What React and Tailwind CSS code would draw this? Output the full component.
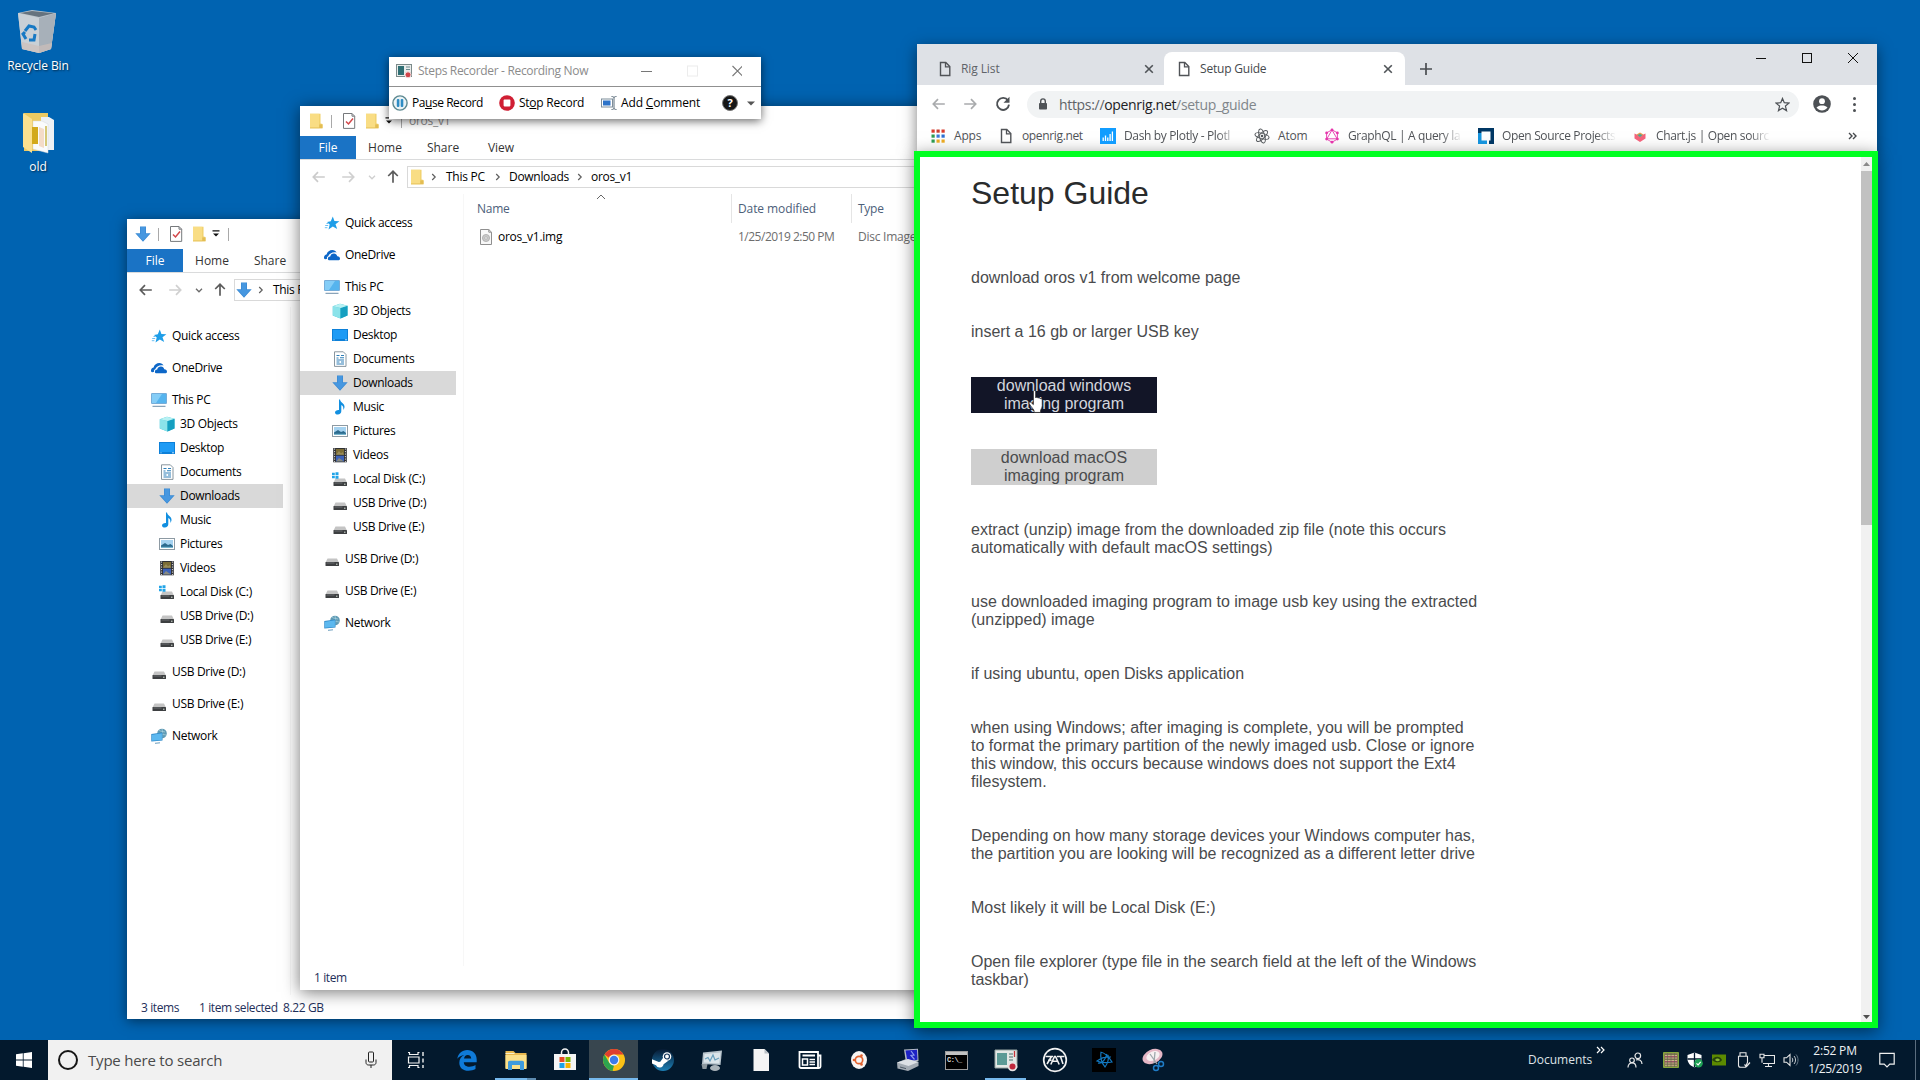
import React from "react";

const UI = "font-['Open_Sans','Noto_Sans',sans-serif]";

/* ---------- small icons ---------- */

function Ico({ size = 16, vb = 16, children, className = "" }) {
  return (
    <svg width={size} height={size} viewBox={`0 0 ${vb} ${vb}`} fill="none" className={`shrink-0 ${className}`}>
      {children}
    </svg>
  );
}

const StarIcon = () => (
  <Ico>
    <path d="M8.8 1.5 10.4 6l5 .3-3.9 3 1.7 4.8-4.400-2.600-4.300 2.900 1.200-4.900L3 7l3.800-.8z" fill="#1f9ee8" />
    <path d="M1.200 10.500h3M.8 12.700h2.600M2.500 8.500h2" stroke="#5bb8f0" strokeWidth=".9" />
  </Ico>
);
const CloudIcon = () => (
  <Ico>
    <path d="M0 11.300C-.3 8.600 1.400 7.600 2.600 7.500 3.200 4.500 5.800 3 8.300 3c2 0 3.500 1 4.300 2.500C8.500 4.500 5 6.800 4.300 9.300 3 9.700 2.700 11 3 12 1.300 12.300 .3 12.200 0 11.300z" fill="#0d67c8" />
    <path d="M4 12.500c-.6-2.200 1-3.200 2.200-3.100C6.700 7.300 8.300 6.400 10 6.500c1.700.1 2.900 1.200 3.300 2.800 1.700.1 2.700 1.300 2.700 2.500 0 .9-.5 1.400-1.200 1.400H5c-.5 0-.9-.3-1-.7z" fill="#0d67c8" />
  </Ico>
);
const PCIcon = () => (
  <Ico>
    <rect x=".3" y="1.300" width="15.400" height="10.400" fill="#3d8bc9" />
    <path d="M1 2h14v9H1z" fill="#56b4ee" />
    <path d="M1 2h10L5 11H1z" fill="#84cdf7" />
    <path d="M1.500 14.300h13" stroke="#6d8ea8" strokeWidth="1" />
  </Ico>
);
const CubeIcon = () => (
  <Ico>
    <path d="M.8 3.300 8 .8l7.500 1.900v9.800L8.500 15.600.8 12.600z" fill="#34bfd2" />
    <path d="M.8 3.300 8.500 5v10.600L.8 12.600z" fill="#8be3ea" />
    <path d="M8.500 5 15.500 2.700v9.800L8.500 15.600z" fill="#159fc0" />
    <path d="M.8 3.300 8 .8l7.500 1.900L8.500 5z" fill="#b8f1f3" />
  </Ico>
);
const DesktopIcon = () => (
  <Ico>
    <rect x="0" y="2" width="16" height="12" fill="#0d80d8" />
    <rect x="1" y="3" width="14" height="9" fill="#1e9bf5" />
    <path d="M1.500 12.800h1M13 12.800h2" stroke="#b8e0ff" strokeWidth="1" />
  </Ico>
);
const DocumentsIcon = () => (
  <Ico>
    <path d="M2.500.8h8.800l2.700 2.700v11.900H2.500z" fill="#fff" stroke="#7c8a94" strokeWidth=".9" />
    <path d="M4.500 4.500h3M9 4.500h3M4.500 7h2M8 6.800h4M4.500 9h7.500M4.500 11h3M9 11h3M4.500 13h7.500" stroke="#2e7fb8" strokeWidth="1.100" />
  </Ico>
);
const DownIcon = () => (
  <Ico>
    <path d="M5 .5h6v6.700h4.700L8 15.800.3 7.200H5z" fill="#3989d3" />
    <path d="M5.700 1h4.600v7H14L8 14.800 2 8h3.700z" fill="#4697e0" />
  </Ico>
);
const MusicIcon = () => (
  <Ico>
    <path d="M8 .5c.4 3 4.500 3.800 4.500 7.200 0 1.500-.6 2.400-1.200 3.200.4-2.600-.3-4.100-2-4.900v6.300c0 1.900-1.500 3.200-3.500 3.200-1.700 0-2.800-.9-2.800-2.100 0-1.600 1.800-2.700 4-2.500V.5z" fill="#128fe0" />
  </Ico>
);
const PicturesIcon = () => (
  <Ico>
    <rect x=".5" y="2.500" width="15" height="11" fill="#fff" stroke="#8d9aa3" />
    <rect x="2" y="4" width="12" height="8" fill="#a5d2f0" />
    <path d="M2 9.500 6 7l3 2 2.500-1L14 10v2H2z" fill="#2c6b8e" />
    <path d="M2 10.800h12V12H2z" fill="#78b6cf" />
  </Ico>
);
const VideosIcon = () => (
  <Ico>
    <rect x="1.200" y="1" width="13.600" height="14.300" fill="#2f3033" />
    <rect x="4" y="2" width="8" height="5.800" fill="#7b6c35" />
    <rect x="4" y="8.700" width="8" height="5.800" fill="#3d62b8" />
    <path d="M4 7.800 7 4l2 2.500L10.500 5 12 7.800zM4 14.500 7 11l5 3.500z" fill="#a99c6a" opacity=".7" />
    <path d="M2.600 1.500v13.500M13.400 1.500v13.500" stroke="#d9d9d9" strokeWidth="1" strokeDasharray="1.200 1.300" />
  </Ico>
);
const DriveIcon = ({ win }) => (
  <Ico>
    <path d="M3.500 7.500h9.500l1.800 3.800H1.700z" fill="#c4c4c4" />
    <rect x="1.500" y="11" width="13.500" height="4" rx=".5" fill="#3d3f41" />
    <path d="M2.500 12h8" stroke="#77797b" strokeWidth=".8" />
    <rect x="12" y="12.700" width="1.500" height="1" fill="#d8e2d8" />
    {win && <path d="M0 1.800h2.800v2.400H0zM3.500 1.300h3v2.900h-3zM0 4.900h2.800v2.400H0zM3.500 4.900h3v2.900h-3z" fill="#21a4e8" />}
  </Ico>
);
const NetworkIcon = () => (
  <Ico>
    <circle cx="11" cy="5.500" r="4.800" fill="#5f9ab4" />
    <path d="M8 2c2 2 4 1 6 2M7 6c3 1 5 0 8 1M11 1c1 3 1 6 0 9" stroke="#b6dce6" strokeWidth=".6" />
    <path d="M.3 6 11.500 4.500v8L.3 13.500z" fill="#2b86c6" />
    <path d="M1 6.700 10.900 5.300v6.600L1 12.800z" fill="#5cb8ef" />
    <path d="M4 15.300l5-.5" stroke="#6a9cbd" />
  </Ico>
);
const FolderIcon = ({ className }) => (
  <Ico className={className}>
    <path d="M2 .8h10.500v9.700l2 .5v4.200H2z" fill="#f0cf68" />
    <path d="M2 .8h9.300v14.400H2z" fill="#f9dd84" />
    <path d="M11.300 11.500h3.200v3.700H2v-.6h9.300z" fill="#e3bd53" />
  </Ico>
);
const CheckDocIcon = () => (
  <Ico>
    <path d="M2.500.5h8.500l2.700 2.700v12.200H2.500z" fill="#fff" stroke="#76797c" />
    <path d="M11 .5v2.700h2.700" stroke="#76797c" />
    <path d="M5 8.500 7.500 11 12 5.500" stroke="#d2474a" strokeWidth="1.500" />
  </Ico>
);
const DiscFileIcon = () => (
  <Ico>
    <path d="M2.500.5h8.300l2.700 2.700v12.300h-11z" fill="#f8f8f8" stroke="#8f8f8f" />
    <path d="M10.800.5v2.700h2.700" stroke="#8f8f8f" />
    <circle cx="8" cy="9" r="3.600" fill="#c9c9c9" stroke="#a5a5a5" strokeWidth=".7" />
    <circle cx="8" cy="9" r="1.200" fill="#fff" stroke="#999" strokeWidth=".6" />
  </Ico>
);
const PageIcon = () => (
  <Ico>
    <path d="M3.500 1.500h5.300l4 4v9H3.500z" stroke="#505357" strokeWidth="1.400" />
    <path d="M8.500 1.700v4.100h4.100" stroke="#505357" strokeWidth="1.300" />
  </Ico>
);
const Arrow = ({ dir, color }) => (
  <Ico size={14} vb={14}>
    <g transform={dir === "right" ? "rotate(180 7 7)" : dir === "up" ? "rotate(90 7 7)" : undefined}>
      <path d="M12.800 7H1.500M6 2.200 1.300 7 6 11.800" stroke={color} strokeWidth="1.700" />
    </g>
  </Ico>
);
const Crumb = () => (
  <svg width="6" height="8" viewBox="0 0 6 8" fill="none" className="shrink-0">
    <path d="m1.200 1 3 3-3 3" stroke="#5f5f5f" strokeWidth="1.200" />
  </svg>
);
const MenuCaret = () => (
  <svg width="8" height="8" viewBox="0 0 8 8" className="shrink-0">
    <path d="M.5.300h7v1.200h-7zM1 3.500h6L4 6.600z" fill="#111" />
  </svg>
);

/* ---------- explorer ---------- */

const NAV = [
  ["Quick access", 1, StarIcon, "mb-2"],
  ["OneDrive", 1, CloudIcon, "mb-2"],
  ["This PC", 1, PCIcon],
  ["3D Objects", 2, CubeIcon],
  ["Desktop", 2, DesktopIcon],
  ["Documents", 2, DocumentsIcon],
  ["Downloads", 2, DownIcon],
  ["Music", 2, MusicIcon],
  ["Pictures", 2, PicturesIcon],
  ["Videos", 2, VideosIcon],
  ["Local Disk (C:)", 2, () => <DriveIcon win />],
  ["USB Drive (D:)", 2, DriveIcon],
  ["USB Drive (E:)", 2, DriveIcon, "mb-2"],
  ["USB Drive (D:)", 1, DriveIcon, "mb-2"],
  ["USB Drive (E:)", 1, DriveIcon, "mb-2"],
  ["Network", 1, NetworkIcon],
];

function NavPane() {
  return (
    <nav className="flex w-[156px] shrink-0 flex-col pt-[17px] tracking-[-0.32px]">
      {NAV.map(([label, level, Icon, gap], i) => (
        <div
          key={i}
          className={`flex h-6 shrink-0 items-center ${level === 1 ? "gap-[5px] pl-6" : "gap-[5px] pl-8"} ${gap || ""} ${label === "Downloads" ? "bg-[#d9d9d9]" : ""}`}
        >
          <Icon />
          <span className="whitespace-nowrap">{label}</span>
        </div>
      ))}
    </nav>
  );
}

function Explorer({ lead, title, canGoBack, tabs, crumbs, children, status }) {
  return (
    <div className={`flex h-full flex-col bg-white text-[12px] tracking-[-0.25px] text-black ${UI}`}>
      <div className="flex h-[30px] shrink-0 items-center pl-2">
        {lead}
        <span className="ml-[7px] h-[13px] w-px bg-[#a9a9a9]" />
        <div className="ml-[9px]"><CheckDocIcon /></div>
        <div className="ml-[7px]"><FolderIcon /></div>
        <div className="ml-[5px]"><MenuCaret /></div>
        <span className="ml-[8px] h-[13px] w-px bg-[#a9a9a9]" />
        <span className="ml-[7px] text-[#8b8b8b]">{title}</span>
      </div>
      <div className="flex h-6 shrink-0 items-stretch border-b border-[#dadbdc] text-[#333] tracking-[0px]">
        <div className="flex w-14 items-center justify-center bg-[#1a73c5] text-white">File</div>
        {tabs.map((t) => (
          <div key={t} className="flex w-[58px] items-center justify-center">{t}</div>
        ))}
      </div>
      <div className="flex h-[34px] shrink-0 items-center pl-3">
        <Arrow dir="left" color={canGoBack ? "#5c5c5c" : "#cbcbcb"} />
        <div className="ml-[15px]"><Arrow dir="right" color="#d0d0d0" /></div>
        <svg width="8" height="5" viewBox="0 0 8 5" className="ml-[13px]">
          <path d="m1 .8 3 3 3-3" fill="none" stroke={canGoBack ? "#6a6a6a" : "#cfcfcf"} strokeWidth="1.300" />
        </svg>
        <div className="ml-[10px]"><Arrow dir="up" color="#5c5c5c" /></div>
        <div className="ml-[7px] flex h-[22px] flex-1 items-center border border-[#d9d9d9] pl-px">
          {crumbs}
        </div>
      </div>
      <div className="flex min-h-0 flex-1">
        <NavPane />
        <div className="w-2 border-r border-[#f7f7f7]" />
        {children}
      </div>
      <div className="flex h-6 shrink-0 items-center gap-5 pl-[14px] tracking-[-0.4px] text-[#1e2f5a]">{status}</div>
    </div>
  );
}

function BackExplorer() {
  return (
    <div className="absolute left-[127px] top-[219px] h-[800px] w-[830px] shadow-[0_2px_12px_rgba(0,0,0,0.5)]">
      <Explorer
        lead={<DownIcon />}
        canGoBack
        tabs={["Home", "Share", "View"]}
        crumbs={
          <>
            <DownIcon />
            <div className="ml-[6px]"><Crumb /></div>
            <span className="ml-[9px] tracking-[-0.3px]">This PC</span>
          </>
        }
        status={
          <>
            <span className="pt-px">3 items</span>
            <span className="pt-px">1 item selected&nbsp; 8.22 GB</span>
          </>
        }
      />
    </div>
  );
}

function FrontExplorer() {
  return (
    <div className="absolute left-[300px] top-[106px] h-[884px] w-[660px] shadow-[0_2px_16px_rgba(0,0,0,0.55)]">
      <Explorer
        lead={<FolderIcon />}
        title="oros_v1"
        tabs={["Home", "Share", "View"]}
        crumbs={
          <>
            <FolderIcon />
            <div className="ml-[6px]"><Crumb /></div>
            <span className="ml-[9px] w-[41px] whitespace-nowrap">This PC</span>
            <div className="ml-[8px]"><Crumb /></div>
            <span className="ml-[8px] w-[60px] tracking-[-0.3px]">Downloads</span>
            <div className="ml-[8px]"><Crumb /></div>
            <span className="ml-[8px] tracking-[-0.3px]">oros_v1</span>
          </>
        }
        status={<span>1 item</span>}
      >
        <div className="flex flex-1 flex-col overflow-hidden">
          <div className="grid h-[30px] grid-cols-[267px_120px_1fr] pb-px text-[#4c607a]">
            <div className="relative flex items-center pl-[13px]">
              Name
              <svg width="10" height="6" viewBox="0 0 10 6" className="absolute left-[132px] top-0">
                <path d="m1 5 4-4 4 4" fill="none" stroke="#666" />
              </svg>
            </div>
            <div className="flex items-center whitespace-nowrap border-l border-[#e5e5e5] pl-[6px] tracking-[-0.1px]">Date modified</div>
            <div className="flex items-center border-l border-[#e5e5e5] pl-[6px]">Type</div>
          </div>
          <div className="grid h-[26px] grid-cols-[267px_120px_1fr] text-[#6d6d6d]">
            <div className="flex items-center gap-1 pl-[14px] text-black">
              <DiscFileIcon />
              <span>oros_v1.img</span>
            </div>
            <div className="flex items-center whitespace-nowrap pl-[7px] tracking-[-0.5px]">1/25/2019 2:50 PM</div>
            <div className="flex items-center whitespace-nowrap pl-[7px]">Disc Image File</div>
          </div>
        </div>
      </Explorer>
    </div>
  );
}

/* ---------- steps recorder ---------- */

function StepsRecorder() {
  return (
    <div className={`absolute left-[389px] top-[57px] flex h-[62px] w-[372px] flex-col bg-white text-[12px] shadow-[0_2px_9px_rgba(0,0,0,0.6)] ${UI}`}>
      <div className="flex h-[30px] shrink-0 items-center border-b border-[#909090] pb-px pl-[7px]">
        <Ico>
          <rect x=".5" y="1.500" width="15" height="12" fill="#e9eceb" stroke="#7b8a8a" />
          <rect x="2" y="3" width="6" height="9" fill="#2f6f74" />
          <path d="M10 4h4M10 6.500h4" stroke="#6d8b8e" />
          <circle cx="12" cy="11.800" r="3" fill="#d0444a" stroke="#f2dede" />
        </Ico>
        <span className="ml-[6px] w-[200px] whitespace-nowrap tracking-[-0.320px] text-[#8b8b8b]">Steps Recorder - Recording Now</span>
        <svg width="104" height="12" viewBox="0 0 104 12" fill="none" className="ml-[20px]">
          <path d="M3 6.500h11" stroke="#777" />
          <rect x="49.500" y="1" width="10" height="10" stroke="#ececec" />
          <path d="m94.500 1 10 10m0-10-10 10" stroke="#777" strokeWidth="1.100" />
        </svg>
      </div>
      <div className="flex flex-1 items-center whitespace-nowrap pl-[3px] text-black">
        <Ico>
          <circle cx="8" cy="8" r="7.100" fill="#eaf3f6" stroke="#5c8890" strokeWidth="1.400" />
          <rect x="4.800" y="4" width="2.600" height="8" rx="1" fill="#2e8cc4" />
          <rect x="8.700" y="4" width="2.600" height="8" rx="1" fill="#2e8cc4" />
        </Ico>
        <span className="ml-1 w-[72px] tracking-[-0.45px]">Pa<u>u</u>se Record</span>
        <Ico className="ml-[15px]">
          <circle cx="8" cy="8" r="7.800" fill="#d01f34" />
          <rect x="4.600" y="4.600" width="6.800" height="6.800" rx=".8" fill="#fff" />
        </Ico>
        <span className="ml-1 w-[65px] tracking-[-0.25px]">St<u>o</u>p Record</span>
        <Ico className="ml-[17px]">
          <rect x=".5" y="4" width="11" height="8" fill="#fff" stroke="#7d8d9a" />
          <rect x="2" y="5.500" width="7.500" height="5" fill="#2d73c9" />
          <path d="M10.500 1.500c1.500 0 2.500.3 2.500 1.500v10c0 1.200-1 1.500-2.500 1.500M15.500 1.500C14 1.500 13 1.800 13 3M15.500 14.500c-1.500 0-2.500-.3-2.500-1.500" stroke="#5b6d7b" />
        </Ico>
        <span className="ml-[4px] w-[80px] tracking-[-0.15px]">Add <u>C</u>omment</span>
        <div className="ml-[21px] flex h-4 w-4 items-center justify-center rounded-full border border-[#777] bg-[#161616] text-[11px] font-bold text-white">?</div>
        <svg width="8" height="5" viewBox="0 0 8 5" className="ml-[9px]"><path d="M0 .5h8L4 4.500z" fill="#555" /></svg>
      </div>
    </div>
  );
}

/* ---------- browser ---------- */

const CloseX = () => (
  <Ico size={10} vb={10}>
    <path d="m1.200 1.200 7.600 7.600m0-7.600L1.200 8.800" stroke="#4f5357" strokeWidth="1.600" />
  </Ico>
);

const BOOKMARKS = [
  ["Apps", "w-[28px]", () => (
    <Ico>
      {["#d93b2b", "#c93d2e", "#d93b2b", "#2e9a50", "#3a78d8", "#2d6fd0", "#2e9a50", "#e8a822", "#e8a822"].map((c, i) => (
        <rect key={i} x={1.500 + (i % 3) * 5} y={1.500 + Math.floor(i / 3) * 5} width="3.200" height="3.200" fill={c} />
      ))}
    </Ico>
  )],
  ["openrig.net", "w-[62px] tracking-[-0.35px]", PageIcon],
  ["Dash by Plotly - Plotl", "w-[114px]", () => (
    <Ico>
      <rect width="16" height="16" fill="#119dff" />
      <path d="M3.200 9.500V13M5.500 7.500V13M7.800 9.500V13M10.100 6V13M12.400 3.500V13" stroke="#fff" strokeWidth="1.300" />
    </Ico>
  )],
  ["Atom", "w-[30px]", () => (
    <Ico>
      <g stroke="#55595d" strokeWidth="1">
        <ellipse cx="8" cy="8" rx="7.200" ry="2.700" transform="rotate(15 8 8)" />
        <ellipse cx="8" cy="8" rx="7.200" ry="2.700" transform="rotate(75 8 8)" />
        <ellipse cx="8" cy="8" rx="7.200" ry="2.700" transform="rotate(-45 8 8)" />
      </g>
      <circle cx="8" cy="8" r="1.300" fill="#55595d" />
    </Ico>
  )],
  ["GraphQL | A query la", "w-[114px]", () => (
    <Ico>
      <path d="M8 1.800 13.400 4.900v6.200L8 14.200 2.600 11.100V4.900zM8 2 2.900 10.800h10.200z" stroke="#e535ab" strokeWidth=".9" />
      <g fill="#e535ab">
        <circle cx="8" cy="1.800" r="1.400" /><circle cx="13.400" cy="4.900" r="1.400" /><circle cx="13.400" cy="11.100" r="1.400" />
        <circle cx="8" cy="14.200" r="1.400" /><circle cx="2.600" cy="11.100" r="1.400" /><circle cx="2.600" cy="4.900" r="1.400" />
      </g>
    </Ico>
  )],
  ["Open Source Projects", "w-[114px]", () => (
    <Ico>
      <path d="M0 0h16v16h-5v-3.500h1.500v-9h-9V5H0z" fill="#003764" />
      <path d="M0 5h3.500v7.500H9V16H0z" fill="#1593dc" />
    </Ico>
  )],
  ["Chart.js | Open sourc", "w-[114px]", () => (
    <Ico>
      <path d="M2.500 5.500 8 8l5.500-2.500v5L8 14l-5.500-3.500z" fill="#f3637c" />
      <path d="M4.500 6.500 8 4.500l3.500 2L8 9.500z" fill="#e8a04a" />
      <path d="M5.500 7 8 6l2.500 1L8 9.200z" fill="#4f9f9a" />
    </Ico>
  )],
];

const STEPS_AFTER = [
  ["extract (unzip) image from the downloaded zip file (note this occurs", "automatically with default macOS settings)"],
  ["use downloaded imaging program to image usb key using the extracted", "(unzipped) image"],
  ["if using ubuntu, open Disks application"],
  [
    "when using Windows; after imaging is complete, you will be prompted",
    "to format the primary partition of the newly imaged usb. Close or ignore",
    "this window, this occurs because windows does not support the Ext4",
    "filesystem.",
  ],
  ["Depending on how many storage devices your Windows computer has,", "the partition you are looking will be recognized as a different letter drive"],
  ["Most likely it will be Local Disk (E:)"],
  ["Open file explorer (type file in the search field at the left of the Windows", "taskbar)"],
];

function Lines({ lines }) {
  return (
    <p>
      {lines.map((l) => (
        <span key={l} className="block whitespace-nowrap">{l}</span>
      ))}
    </p>
  );
}

function HandCursor() {
  return (
    <svg width="17" height="24" viewBox="0 0 16 23" className="absolute left-[57px] top-[13px]">
      <path
        d="M5 1.500c0-1.300 2.200-1.300 2.200 0v6c.3-.9 2.100-.8 2.200.3.500-.7 2-.5 2.100.6.600-.5 2-.2 2 1.100V15c0 2.200-1.600 3.300-1.600 5.200v1.300H5.700v-1.300c0-1.600-3-3.800-4.700-7.200-.5-1.200.9-2 1.900-.9L5 14z"
        fill="#fff"
        stroke="#1a1a1a"
        strokeWidth=".7"
      />
    </svg>
  );
}

function Browser() {
  return (
    <div className="absolute left-[914px] top-[44px] h-[984px] w-[964px]">
      <div className={`ml-[3px] flex h-[107px] w-[960px] flex-col bg-white text-[12px] shadow-[0_4px_14px_rgba(0,0,0,0.5)] ${UI}`}>
        <div className="flex h-[41px] shrink-0 items-end bg-[#dee1e6]">
          <div className="flex h-[33px] w-[247px] items-center pl-5">
            <PageIcon />
            <span className="ml-2 w-[188px] whitespace-nowrap tracking-[-0.1px] text-[#5f6368]">Rig List</span>
            <div className="-ml-[5px]"><CloseX /></div>
          </div>
          <div className="flex h-[33px] w-[241px] items-center rounded-t-lg bg-white pl-3">
            <PageIcon />
            <span className="ml-2 w-[183px] whitespace-nowrap tracking-[-0.2px] text-[#45494d]">Setup Guide</span>
            <CloseX />
          </div>
          <div className="flex h-[33px] items-center pl-[15px]">
            <Ico size={12} vb={12}><path d="M6 0v12M0 6h12" stroke="#4a4d51" strokeWidth="1.700" /></Ico>
          </div>
          <svg width="104" height="12" viewBox="0 0 104 12" fill="none" className="mb-[21px] ml-[323px]">
            <path d="M1 6.500h10" stroke="#111" />
            <rect x="47.500" y="1.500" width="9" height="9" stroke="#111" />
            <path d="m93 1 10 10m0-10L93 11" stroke="#111" />
          </svg>
        </div>
        <div className="flex h-[38px] shrink-0 items-center pl-[15px]">
          <Arrow dir="left" color="#a9abad" />
          <div className="ml-[17px]"><Arrow dir="right" color="#a9abad" /></div>
          <Ico className="ml-[18px]">
            <path d="M13 4.500A6 6 0 1 0 14 8.700" stroke="#4d5155" strokeWidth="1.900" />
            <path d="M14.500.8v6h-6z" fill="#4d5155" />
          </Ico>
          <div className="ml-[16px] flex h-[27px] w-[772px] shrink-0 items-center rounded-full bg-[#f1f3f4] pl-[10px] text-[14px] tracking-[-0.32px] text-[#80868b]">
            <Ico size={12} vb={12}>
              <rect x="2" y="5" width="8" height="6.500" rx=".8" fill="#4f5357" />
              <path d="M3.700 5V3.200a2.300 2.300 0 0 1 4.600 0V5" stroke="#4f5357" strokeWidth="1.400" />
            </Ico>
            <div className="ml-[10px] w-[716px] whitespace-nowrap"><span className="text-[#5f6368]">https://</span><span className="text-[#202124]">openrig.net</span>/setup_guide</div>
            <Ico size={15} vb={16}>
              <path d="m8 1.500 1.900 4.600 5 .4-3.800 3.200 1.200 4.800L8 11.900l-4.300 2.600 1.200-4.800L1.100 6.500l5-.4z" stroke="#4d5155" strokeWidth="1.300" />
            </Ico>
          </div>
          <Ico size={18} vb={18} className="ml-[14px]">
            <circle cx="9" cy="9" r="8.800" fill="#4d5155" />
            <circle cx="9" cy="6.200" r="2.900" fill="#fff" />
            <path d="M3.500 12.600C4.500 10.900 7 10.400 9 10.400s4.500.5 5.500 2.200C13 14.600 11 15.600 9 15.600s-4-1-5.500-3z" fill="#fff" />
          </Ico>
          <div className="ml-[22px] flex flex-col gap-[3px]">
            <span className="h-[3px] w-[3px] rounded-full bg-[#4d5155]" />
            <span className="h-[3px] w-[3px] rounded-full bg-[#4d5155]" />
            <span className="h-[3px] w-[3px] rounded-full bg-[#4d5155]" />
          </div>
        </div>
        <div className="flex h-[26px] items-center gap-4 pl-[13px] tracking-[-0.2px] text-[#505357]">
          {BOOKMARKS.map(([label, w, Icon]) => (
            <div key={label} className="flex items-center gap-2">
              <Icon />
              <span
                className={`whitespace-nowrap ${w} ${w === "w-[114px]" ? "tracking-[-0.350px] [mask-image:linear-gradient(to_right,black_82%,transparent)]" : ""}`}
              >
                {label}
              </span>
            </div>
          ))}
          <svg width="9" height="8" viewBox="0 0 9 8" fill="none" className="ml-[62px]">
            <path d="m1 1 3 3-3 3m4-6 3 3-3 3" stroke="#45484c" strokeWidth="1.400" />
          </svg>
        </div>
      </div>
      <div className="flex h-[877px] w-[964px] border-[6px] border-[#00ff21] bg-white shadow-[0_4px_16px_rgba(0,0,0,0.5)]">
        <div className="flex min-w-0 flex-1 flex-col gap-9 overflow-hidden pl-[51px] font-['Liberation_Sans',Arial,sans-serif] text-[16px] leading-[18px] text-[#4a4b4d]">
          <h1 className="mb-[22px] mt-[18px] text-[32px] leading-[36px] text-[#292b2c]">Setup Guide</h1>
          <p>download oros v1 from welcome page</p>
          <p>insert a 16 gb or larger USB key</p>
          <div className="relative w-[186px] bg-[#121527] text-center text-[#d3d6de]">
            download windows
            <br />
            imaging program
            <HandCursor />
          </div>
          <div className="w-[186px] bg-[#cfcfcf] text-center">
            download macOS
            <br />
            imaging program
          </div>
          {STEPS_AFTER.map((lines) => (
            <Lines key={lines[0]} lines={lines} />
          ))}
        </div>
        <div className="flex w-[11px] shrink-0 flex-col items-center bg-[#f1f1f1]">
          <div className="flex h-[14px] items-center"><svg width="7" height="4" viewBox="0 0 7 4"><path d="M0 4h7L3.500 0z" fill="#8a8a8a" /></svg></div>
          <div className="h-[354px] w-full bg-[#c1c1c1]" />
          <div className="mb-[3px] mt-auto"><svg width="7" height="4" viewBox="0 0 7 4"><path d="M0 0h7L3.500 4z" fill="#505050" /></svg></div>
        </div>
      </div>
    </div>
  );
}

/* ---------- taskbar ---------- */

const TASKS = [
  ["edge", (
    <Ico size={24} vb={24}>
      <path d="M2.300 10.800C3 5.500 7 2 12.200 2c5.700 0 9.500 4 9.500 9.500v2.700H8.800c.1 3 2.500 4.500 5.700 4.500 2.200 0 4.200-.6 6-1.600v4c-2 1.100-4.400 1.700-7 1.700C7.900 22.800 4.300 19.600 4.300 14.700c0-3.500 1.900-6.300 5-7.700-2.900.2-5.200 1.700-7 3.800zM9 10.600h7.200c0-2.300-1.300-3.700-3.500-3.700-2.100 0-3.400 1.400-3.700 3.700z" fill="#0f7ad8" />
    </Ico>
  )],
  ["explorer", (
    <Ico size={24} vb={24}>
      <path d="M1.500 3h8l2 2h11v15h-21z" fill="#e8b84f" />
      <path d="M1.500 7h21v14h-21z" fill="#fbe089" />
      <path d="M4 22v-7.500c0-1 .7-1.700 1.700-1.700h12.600c1 0 1.700.7 1.700 1.700V22h-4v-5H8v5z" fill="#3f9bdd" />
      <path d="M1.500 5.500h9" stroke="#f7f0ce" />
    </Ico>
  )],
  ["store", (
    <Ico size={24} vb={24}>
      <path d="M8.500 6V4.500a3.500 3.500 0 0 1 7 0V6" stroke="#f1f1f1" strokeWidth="1.500" />
      <path d="M1 6h22v16H1z" fill="#f5f5f5" />
      <path d="M6.500 9h5v5h-5z" fill="#e74a25" />
      <path d="M12.500 9h5v5h-5z" fill="#7db700" />
      <path d="M6.500 15h5v5h-5z" fill="#1da1e6" />
      <path d="M12.500 15h5v5h-5z" fill="#f8b300" />
    </Ico>
  )],
  ["chrome", (
    <Ico size={24} vb={24}>
      <circle cx="12" cy="12" r="11" fill="#fbc116" />
      <path d="M2.500 6.500A11 11 0 0 1 21.500 6.500H12a5.500 5.500 0 0 0-5 3.300z" fill="#df3e30" />
      <path d="M2.500 6.500 7.200 14.700a5.500 5.500 0 0 0 4.800 2.800l-1.500 5.400A11 11 0 0 1 2.500 6.500z" fill="#2da44f" />
      <circle cx="12" cy="12" r="5.400" fill="#f4f4f4" />
      <circle cx="12" cy="12" r="4.200" fill="#3c7bea" />
    </Ico>
  )],
  ["steam", (
    <Ico size={24} vb={24}>
      <defs>
        <linearGradient id="steam" x1="0" y1="0" x2="0" y2="1">
          <stop offset="0" stopColor="#071a33" /><stop offset="1" stopColor="#1c7fb5" />
        </linearGradient>
      </defs>
      <circle cx="12" cy="12" r="11" fill="url(#steam)" />
      <circle cx="16" cy="8.500" r="4.300" fill="#fff" />
      <circle cx="16" cy="8.500" r="2.500" fill="#fff" stroke="#12345a" strokeWidth="1.200" />
      <path d="m12.300 9.500-3 4.300a4 4 0 0 0-1.500.2L1 11.200v4.300l4 1.700a4 4 0 0 0 7.600-.9l4.400-3.300z" fill="#fff" />
    </Ico>
  )],
  ["monitor", (
    <Ico size={24} vb={24}>
      <path d="M3 4.500 22 2.500 20.500 17 2 16z" fill="#b7c3cb" />
      <path d="m4.500 6 16-1.500-1.300 11L3.800 14.500z" fill="#dbe5ea" />
      <path d="m5 11 3-1.500L10 13l3-6 2 5 4-2" stroke="#6aa0bd" strokeWidth="1.200" />
      <path d="M1.500 16h6l-1 5h-4z" fill="#8c979e" />
      <ellipse cx="15" cy="20" rx="5" ry="3" fill="#aab4ba" />
    </Ico>
  )],
  ["file", (
    <Ico size={24} vb={24}>
      <path d="M4.500 1h11l4.500 4.500V23H4.500z" fill="#f5f5f5" />
      <path d="M15.500 1v4.500H20z" fill="#b9c0c5" />
    </Ico>
  )],
  ["news", (
    <Ico size={24} vb={24}>
      <path d="M1.500 4h18.500v16H3a1.500 1.500 0 0 1-1.500-1.500zM20 7.500h2.500v11a1.500 1.500 0 0 1-1.500 1.500h-3" stroke="#fff" strokeWidth="1.800" />
      <path d="M4.500 7.500H17" stroke="#fff" strokeWidth="2" />
      <path d="M4.500 11h5v6h-5zM11.500 11.500H17M11.500 14H17M11.500 16.500H17" stroke="#fff" strokeWidth="1.500" />
    </Ico>
  )],
  ["ubuntu", (
    <Ico size={20} vb={20}>
      <ellipse cx="10" cy="10" rx="8" ry="9" fill="#f7f5f4" />
      <circle cx="10" cy="10" r="3.700" stroke="#e2622f" strokeWidth="1.700" />
      <circle cx="5" cy="10" r="1.300" fill="#e2622f" />
      <circle cx="12.500" cy="5.600" r="1.300" fill="#e2622f" />
      <circle cx="12.500" cy="14.400" r="1.300" fill="#e2622f" />
    </Ico>
  )],
  ["putty", (
    <Ico size={24} vb={24}>
      <path d="M8 1.500 22 .8 22.500 13 10 15z" fill="#b5bbc4" />
      <path d="m9.500 2.500 11.500-.7.5 10-10 2z" fill="#1d22c4" />
      <path d="m15 3 3 4-3 .5 3.500 4" stroke="#8d9df0" strokeWidth="1.200" />
      <path d="M1 14.500 10 11l12.500 3V18L12 23 1.500 20.500z" fill="#a3abb3" />
      <path d="M1 14.500 12.500 18 22.500 14 12 11z" fill="#dde1e5" />
      <path d="M4 19l6 1.600" stroke="#4e5a66" />
    </Ico>
  )],
  ["cmd", (
    <div className="flex h-[19px] w-[23px] flex-col border border-[#9b9b9b] bg-black font-['Liberation_Mono',monospace] text-[7px] font-bold leading-[8px] text-[#ddd]">
      <span className="h-[3px] bg-[#c2c2c2]" />
      <span className="pl-px pt-px tracking-[-0.5px]">C:\_</span>
    </div>
  )],
  ["steps", (
    <Ico size={24} vb={24}>
      <path d="M1 2h22v18H1z" fill="#e3e8e6" stroke="#98a6a4" />
      <path d="M3 5h10v12H3z" fill="#5b9a96" />
      <path d="M15 6h4M15 9h4M15 12h4" stroke="#7b9694" strokeWidth="1.300" />
      <path d="M20.500 3v6" stroke="#c6353c" strokeWidth="1.300" />
      <circle cx="18.500" cy="18.500" r="4.800" fill="#e7e2e2" />
      <circle cx="18.500" cy="18.500" r="3" fill="#c0283c" />
    </Ico>
  )],
  ["fat", (
    <Ico size={26} vb={26}>
      <circle cx="13" cy="13" r="11.300" stroke="#f2f2f2" strokeWidth="1.700" />
      <path d="M3.500 9.500H11M9.500 9.500 5 17M6 13.300h3.500M8.800 17.500l3.700-8h1l3.700 8M10.800 14.300h4.400M15 9.500h7.500M18.500 9.500 21 17" stroke="#f2f2f2" strokeWidth="1.600" />
    </Ico>
  )],
  ["battle", (
    <div className="flex h-6 w-6 items-center justify-center bg-black">
      <Ico size={22} vb={22}>
        <path d="M7.500 3c5 1 8.500 5 11.500 10-5 1-10 1-15-1 4-3 8-5 14-4M8 3c-1 6 0 10 4 15 3-4 4-8 3-12M5 14c4 1 7-3 9-9" stroke="#1278c0" strokeWidth="1.200" />
      </Ico>
    </div>
  )],
  ["snip", (
    <Ico size={24} vb={24}>
      <ellipse cx="11.500" cy="8.500" rx="10.500" ry="7" transform="rotate(-25 11.500 8.500)" fill="#e5b7c6" />
      <ellipse cx="12" cy="8" rx="7" ry="4.500" transform="rotate(-25 12 8)" fill="#f7f0f2" />
      <path d="m9 6 7 10M14 4l-1 11" stroke="#9fa8ad" strokeWidth="1.300" />
      <circle cx="20" cy="16" r="2.500" stroke="#1f7cc6" strokeWidth="1.500" />
      <circle cx="15" cy="20" r="2.500" stroke="#1f7cc6" strokeWidth="1.500" />
    </Ico>
  )],
];

function Taskbar() {
  return (
    <div className={`absolute inset-x-0 bottom-0 flex h-10 items-stretch bg-[#03192d] text-white ${UI}`}>
      <div className="flex w-12 items-center justify-center">
        <Ico>
          <path d="M0 2.300 6.800 1.300v6.300H0zM7.600 1.200 16 0v7.600H7.600zM0 8.400h6.800v6.300L0 13.700zM7.600 8.400H16V16l-8.400-1.200z" fill="#fff" />
        </Ico>
      </div>
      <div className="flex w-[344px] items-center bg-[#f1f1f1] pl-[10px] text-[#4a4a4a]">
        <div className="h-5 w-5 rounded-full border-[2.500px] border-[#161616]" />
        <span className="ml-[10px] w-[270px] text-[15px] tracking-[-0.2px]">Type here to search</span>
        <svg width="12" height="18" viewBox="0 0 12 18" fill="none" className="ml-[7px]">
          <rect x="3.500" y="1" width="5" height="10" rx="1" stroke="#222" />
          <path d="M1 8.500v3c0 1.500 1 2.500 2.500 2.500h5c1.500 0 2.500-1 2.500-2.500v-3M6 14v3" stroke="#222" />
        </svg>
      </div>
      <div className="flex w-[50px] items-center justify-center pr-[3px]">
        <Ico size={18} vb={18}>
          <path d="M1 1.500h1.500v2H11v-2h1.500M1 16.500h1.500v-2H11v2h1.500M1.500 6h10.500v6H1.500z" stroke="#f2f2f2" strokeWidth="1.200" />
          <path d="M16 1v4M16 7.500v4M16 14v3" stroke="#f2f2f2" strokeWidth="1.400" />
        </Ico>
      </div>
      {TASKS.map(([id, icon]) => (
        <div key={id} className={`flex w-[49px] flex-col items-center ${id === "chrome" ? "bg-[#38464f]" : ""}`}>
          <div className="flex h-[38px] items-center justify-center pt-[2px]">{icon}</div>
          {id === "chrome" && <div className="h-[2px] w-full bg-[#76b9ed]" />}
          {id === "steps" && <div className="h-[2px] w-[41px] bg-[#76b9ed]" />}
          {id === "explorer" && (
            <div className="flex h-[2px] w-[41px]"><span className="flex-1 bg-[#76b9ed]" /><span className="w-[9px] bg-[#5d8bb0]" /></div>
          )}
        </div>
      ))}
      <div className="ml-auto flex items-center pr-1">
        <span className="w-[63px] text-[12px] text-[#dfe3e7]">Documents</span>
        <svg width="10" height="8" viewBox="0 0 10 8" fill="none" className="mb-5 ml-[5px]">
          <path d="m1 1 3 3-3 3m4-6 3 3-3 3" stroke="#fff" strokeWidth="1.200" />
        </svg>
        <Ico className="ml-[21px]">
          <circle cx="10.800" cy="3.800" r="2.800" stroke="#e8e8e8" strokeWidth="1.200" />
          <circle cx="5" cy="8.300" r="2.300" stroke="#e8e8e8" strokeWidth="1.200" />
          <path d="M1 15.500c0-3 1.700-4.700 4-4.700s4 1.700 4 4.700M9 8c3-1 6 .5 6 4" stroke="#e8e8e8" strokeWidth="1.200" />
        </Ico>
        <Ico className="ml-[20px]">
          <rect x=".7" y=".7" width="14.600" height="14.600" fill="#7d6f52" stroke="#9cc43c" />
          <path d="M2 3.500h12M2 6h12M2 8.500h12M2 11h12M2 13.300h12" stroke="#c9b088" />
          <path d="M2 4.700h12M2 9.700h12" stroke="#a3456a" />
          <path d="M4.500 1v14M8 1v14M11.500 1v14" stroke="#5c6b49" strokeWidth=".6" />
        </Ico>
        <Ico className="ml-2">
          <path d="M7.500.5 14.500 3v4c0 4-3 7-7 8.500C3.500 14 .5 11 .5 7V3z" fill="#fff" />
          <path d="M7.500.5v15M.5 7h14" stroke="#03192d" strokeWidth="1.300" />
          <circle cx="11.500" cy="11.300" r="4.300" fill="#1fa055" />
          <path d="m9.500 11.300 1.600 1.600 2.600-3" stroke="#fff" strokeWidth="1.200" />
        </Ico>
        <Ico className="ml-2">
          <rect x="1" y="2.500" width="14" height="11" fill="#5c8a00" />
          <path d="M1 8c2-3 5-4 8-2.500 1 .8 1.500 1.500 2 2.500-1.500 2.500-6 3.500-10 0z" fill="#26420a" />
          <path d="M4 8c1.500-1.700 3-2 5 0-1.500 1.500-3 1.700-5 0z" fill="#86b832" />
        </Ico>
        <Ico className="ml-2">
          <path d="M5 4V.8h6V4M3.500 4.300h9v6l-2 5h-5c-1.500 0-2-.8-2-2z" stroke="#e8e8e8" strokeWidth="1.100" />
          <path d="m9.500 12.500 2 2 3.500-4" stroke="#e8e8e8" strokeWidth="1.200" />
        </Ico>
        <Ico className="ml-[8px]">
          <path d="M5 3.500h10.500v8H4M1 2.300h4v3.500H1zM3 5.800v5M6 14.500h7M9.500 11.500v3" stroke="#e8e8e8" strokeWidth="1.100" />
        </Ico>
        <Ico className="ml-[8px]">
          <path d="M1 5.800h2.500L7 2.500v11L3.500 10.200H1z" stroke="#e8e8e8" strokeWidth="1.100" />
          <path d="M9 5.800c1 1.300 1 3.100 0 4.400M11 4c2 2.300 2 5.700 0 8" stroke="#c7cdd2" />
          <path d="M13 2.500c2.700 3 2.700 8 0 11" stroke="#647686" />
        </Ico>
        <div className="ml-[9px] flex w-[54px] flex-col items-center text-[12px] leading-[18px] tracking-[-0.2px] text-[#eef1f4]">
          <span className="whitespace-nowrap">2:52 PM</span>
          <span className="whitespace-nowrap tracking-[-0.35px]">1/25/2019</span>
        </div>
        <Ico className="ml-[17px]">
          <path d="M.8 1.300h14.400v10.900h-4.400L8 15l-2.800-2.800H.8z" stroke="#f0f0f0" strokeWidth="1.200" />
        </Ico>
        <span className="ml-5 h-10 w-px bg-[#5b6d7e]" />
      </div>
    </div>
  );
}

/* ---------- desktop ---------- */

function DesktopIcons() {
  return (
    <div className={`absolute left-0 top-[9px] flex w-[76px] flex-col items-center text-[12px] leading-4 tracking-[-0.1px] text-white [text-shadow:1px_1px_2px_rgba(0,0,0,0.6)] ${UI}`}>
      <svg width="40" height="45" viewBox="0 0 40 45" fill="none">
        <path d="M0 4 14 1l24 3-5 36-12 4L4 40z" fill="#bcc5cc" />
        <path d="M0 4 21 9l17-5-5 36-12 4L4 40z" fill="#c9d0d6" />
        <path d="M21 9 38 4l-5 36-12 4z" fill="#a7b0b9" />
        <path d="M2 4 14 2l22 2.300L21 8z" fill="#66737e" />
        <path d="m4 33 17 4 13-3-1 6-12 4L4 40z" fill="#cdbfb9" opacity=".7" />
        <path d="m7 22 4-5 5 1 2 3M17 25l-1 6-5 0M8 30l-3-5 2-2" stroke="#1779c4" strokeWidth="3" />
      </svg>
      <span className="mt-1 whitespace-nowrap">Recycle Bin</span>
      <svg width="34" height="43" viewBox="0 0 34 43" fill="none" className="mt-[38px]">
        <path d="M3 1h24v38H3z" fill="#edca62" />
        <path d="M20 5h8l5 3v30H20z" fill="#eef1f4" />
        <path d="M12 9h9l6 3v29l-15-4z" fill="#fafbfc" stroke="#d5d9dc" strokeWidth=".5" />
        <path d="M11 15h6v17h-6z" fill="#d2a91c" />
        <path d="m18 15 5 2v19l-5-2z" fill="#f4dcc8" />
        <path d="M25 14v20" stroke="#c8b74d" strokeWidth="1.500" />
        <path d="M2 1 11 7v34l-9-6z" fill="#fbe08f" />
      </svg>
      <span className="mt-1">old</span>
    </div>
  );
}

export default function App() {
  return (
    <div className="relative h-[1080px] w-[1920px] overflow-hidden bg-[#0063b1]">
      <DesktopIcons />
      <BackExplorer />
      <FrontExplorer />
      <StepsRecorder />
      <Browser />
      <Taskbar />
    </div>
  );
}
